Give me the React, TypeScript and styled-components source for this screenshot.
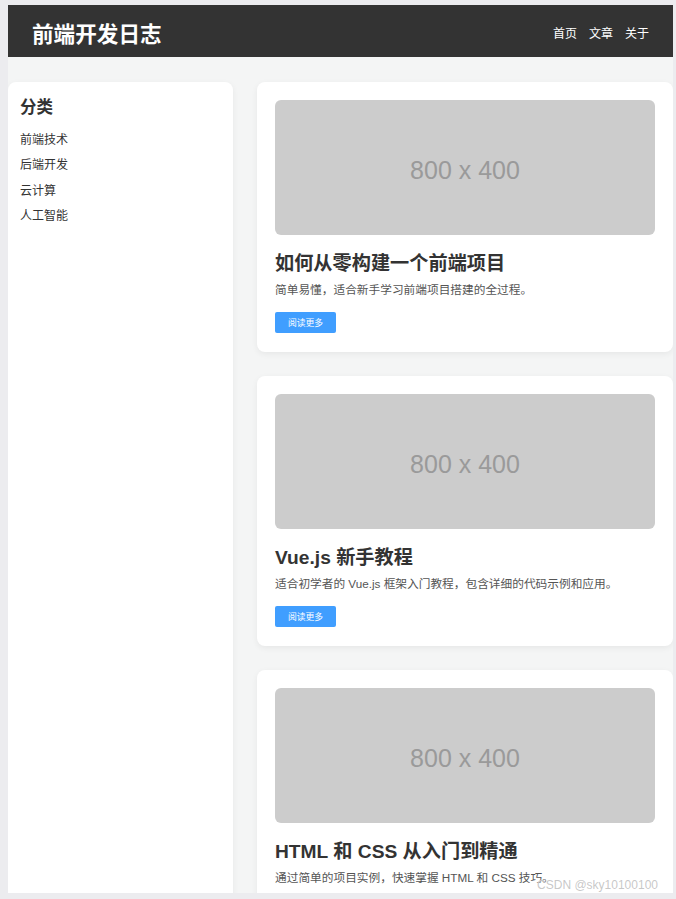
import React from 'react';
import styled, { createGlobalStyle } from 'styled-components';

const GlobalStyle = createGlobalStyle`
  html, body {
    margin: 0;
    padding: 0;
    background: #ededf0;
  }

  * {
    box-sizing: border-box;
  }
`;

const FONT = `"Liberation Sans", "Noto Sans CJK SC", sans-serif`;

const Frame = styled.div`
  position: relative;
  width: 676px;
  height: 899px;
  padding: 5px 3px 6px 8px;
  overflow: hidden;
  background: #ececef;
  font-family: ${FONT};
`;

const Page = styled.div`
  height: 888px;
  overflow: hidden;
  background: #f4f5f5;
`;

const Header = styled.header`
  height: 52px;
  padding: 0 24px;
  display: flex;
  align-items: center;
  justify-content: space-between;
  background: #333333;
  color: #ffffff;
`;

const Logo = styled.h1`
  margin: 0;
  padding-top: 2px;
  font-size: 21.6px;
  font-weight: 700;
`;

const Nav = styled.nav`
  display: flex;
  gap: 12px;
  padding-top: 2px;
`;

const NavLink = styled.a`
  font-size: 12px;
  color: #ffffff;
  text-decoration: none;
`;

const Layout = styled.div`
  display: flex;
  align-items: stretch;
  gap: 24px;
  padding-top: 25px;
`;

const Sidebar = styled.aside`
  flex: 0 0 225px;
  padding: 13px 12px;
  background: #ffffff;
  border-radius: 8px;
  box-shadow: 0 2px 6px rgba(0, 0, 0, 0.06);
`;

const SideTitle = styled.h3`
  margin: 0 0 9px;
  font-size: 16.5px;
  line-height: 24px;
  font-weight: 700;
  color: #333333;
`;

const CategoryList = styled.ul`
  list-style: none;
  margin: 0;
  padding: 0;
`;

const Category = styled.li`
  font-size: 12px;
  line-height: 25.4px;
  color: #333333;
`;

const Main = styled.main`
  flex: 1;
  display: flex;
  flex-direction: column;
  gap: 24px;
`;

const Card = styled.article`
  padding: 18px 18px 19px;
  background: #ffffff;
  border-radius: 8px;
  box-shadow: 0 2px 6px rgba(0, 0, 0, 0.06);
`;

const Placeholder = styled.div`
  height: 135px;
  padding-top: 5px;
  display: flex;
  align-items: center;
  justify-content: center;
  background: #cccccc;
  border-radius: 6px;
  color: #9a9a9a;
  font-family: "Liberation Sans", Arial, sans-serif;
  font-size: 25px;
`;

const CardTitle = styled.h2`
  margin: 16px 0 0;
  font-size: 19.2px;
  line-height: 25px;
  font-weight: 700;
  color: #333333;
`;

const CardText = styled.p`
  margin: 5px 0 0;
  font-size: 11.7px;
  line-height: 18px;
  color: #555555;
`;

const ReadMore = styled.button`
  display: block;
  margin-top: 13px;
  width: 61px;
  height: 21px;
  padding: 0;
  border: none;
  border-radius: 2px;
  background: #409eff;
  color: #ffffff;
  font-family: ${FONT};
  font-size: 8.8px;
  cursor: pointer;
`;

const Watermark = styled.span`
  position: absolute;
  right: 18px;
  bottom: 7px;
  font-family: "Liberation Sans", sans-serif;
  font-size: 12px;
  color: rgba(175, 175, 175, 0.7);
  text-shadow: 0 0 1px #ffffff;
  pointer-events: none;
`;

const categories = ['前端技术', '后端开发', '云计算', '人工智能'];

const posts = [
  { title: '如何从零构建一个前端项目', text: '简单易懂，适合新手学习前端项目搭建的全过程。' },
  { title: 'Vue.js 新手教程', text: '适合初学者的 Vue.js 框架入门教程，包含详细的代码示例和应用。' },
  { title: 'HTML 和 CSS 从入门到精通', text: '通过简单的项目实例，快速掌握 HTML 和 CSS 技巧。' },
];

export default function App() {
  return (
    <>
      <GlobalStyle />
      <Frame>
        <Page>
          <Header>
            <Logo>前端开发日志</Logo>
            <Nav>
              <NavLink href="#">首页</NavLink>
              <NavLink href="#">文章</NavLink>
              <NavLink href="#">关于</NavLink>
            </Nav>
          </Header>
          <Layout>
            <Sidebar>
              <SideTitle>分类</SideTitle>
              <CategoryList>
                {categories.map((c) => (
                  <Category key={c}>{c}</Category>
                ))}
              </CategoryList>
            </Sidebar>
            <Main>
              {posts.map((p) => (
                <Card key={p.title}>
                  <Placeholder>800 x 400</Placeholder>
                  <CardTitle>{p.title}</CardTitle>
                  <CardText>{p.text}</CardText>
                  <ReadMore>阅读更多</ReadMore>
                </Card>
              ))}
            </Main>
          </Layout>
        </Page>
        <Watermark>CSDN @sky10100100</Watermark>
      </Frame>
    </>
  );
}
